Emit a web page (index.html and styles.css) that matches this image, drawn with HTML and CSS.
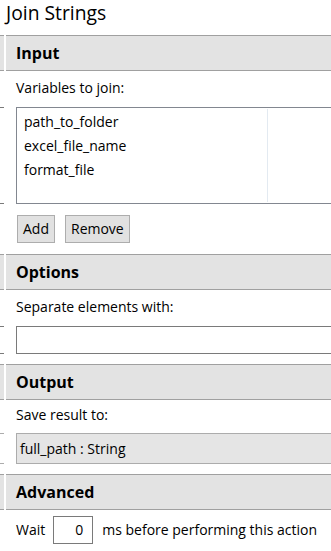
FILE: index.html
```html
<!DOCTYPE html>
<html lang="en">
<head>
<meta charset="utf-8">
<title>Join Strings</title>
<link rel="stylesheet" href="styles.css">
</head>
<body>
<div class="panel">
  <div class="title">Join Strings</div>

  <div class="row hdr"><div class="gut"></div><h2 class="hdr-bar">Input</h2></div>
  <div class="label">Variables to join:</div>
  <div class="row ctl ctl-list">
    <div class="gut"></div>
    <div class="main">
      <div class="listbox">
        <div class="list-col">
          <div class="item">path_to_folder</div>
          <div class="item">excel_file_name</div>
          <div class="item">format_file</div>
        </div>
      </div>
    </div>
  </div>
  <div class="buttons">
    <button class="btn">Add</button>
    <button class="btn">Remove</button>
  </div>

  <div class="row hdr"><div class="gut"></div><h2 class="hdr-bar">Options</h2></div>
  <div class="label">Separate elements with:</div>
  <div class="row ctl">
    <div class="gut"></div>
    <div class="main"><div class="textbox"></div></div>
  </div>

  <div class="row hdr"><div class="gut"></div><h2 class="hdr-bar">Output</h2></div>
  <div class="label label-tight">Save result to:</div>
  <div class="row ctl ctl-light">
    <div class="gut"></div>
    <div class="main"><div class="combo">full_path : String</div></div>
  </div>

  <div class="row hdr"><div class="gut"></div><h2 class="hdr-bar">Advanced</h2></div>
  <div class="wait">
    <span class="wait-text">Wait</span>
    <span class="num">0</span>
    <span class="wait-text">ms before performing this action</span>
  </div>
</div>
</body>
</html>
```
FILE: styles.css
```css
html, body {
  margin: 0;
  padding: 0;
  background: #ffffff;
  overflow: hidden;
}

body {
  font-family: "Open Sans", "Noto Sans", sans-serif;
  font-size: 14px;
  color: #000000;
}

.panel {
  width: 331px;
}

.title {
  font-size: 19.3px;
  line-height: 26px;
  height: 35px;
  padding-left: 6px;
  box-sizing: border-box;
}

.row {
  display: flex;
  column-gap: 2px;
}

.gut {
  flex: none;
  width: 4px;
  box-sizing: border-box;
}

.hdr .gut,
.hdr-bar {
  background: #e3e3e3;
  border-top: 1px solid #a0a0a0;
  border-bottom: 1px solid #a0a0a0;
}

.hdr-bar {
  flex: 1;
  margin: 0;
  height: 36px;
  box-sizing: border-box;
  padding-left: 10px;
  font-size: 16px;
  font-weight: 700;
  line-height: 34px;
}

.label {
  padding: 7px 0 9px 16px;
  line-height: 20px;
}

.label-tight {
  padding: 5px 0 8px 16px;
}

.ctl {
  margin-bottom: 10px;
}

.ctl-list {
  margin-bottom: 0;
}

.ctl .gut {
  border-top: 1px solid #7a7a7a;
  border-bottom: 1px solid #7a7a7a;
}

.ctl-light .gut {
  border-color: #acacac;
}

.main {
  flex: 1;
  min-width: 0;
  padding-left: 10px;
}

.listbox {
  height: 97px;
  box-sizing: border-box;
  border: 1px solid #828790;
  border-right: none;
  display: flex;
}

.list-col {
  width: 251px;
  margin: 1px 0;
  padding: 1px 0 0 7px;
  box-sizing: border-box;
  border-right: 1px solid #e3eaf1;
}

.item {
  line-height: 24px;
  white-space: nowrap;
}

.buttons {
  display: flex;
  column-gap: 10px;
  padding: 11px 0 11px 17px;
}

.btn {
  height: 28px;
  box-sizing: border-box;
  border: 1px solid #adadad;
  background: #e1e1e1;
  padding: 0 5px;
  margin: 0;
  font: inherit;
  line-height: 26px;
  color: #000000;
  border-radius: 0;
}

.textbox {
  height: 28px;
  box-sizing: border-box;
  border: 1px solid #7a7a7a;
  border-right: none;
  background: #ffffff;
}

.combo {
  height: 31px;
  box-sizing: border-box;
  border: 1px solid #acacac;
  border-right: none;
  background: #e5e5e5;
  padding: 1px 0 0 3px;
  line-height: 28px;
  white-space: nowrap;
}

.wait {
  display: flex;
  align-items: center;
  padding: 6px 0 0 16px;
  line-height: 20px;
  white-space: nowrap;
}

.num {
  width: 40px;
  height: 28px;
  box-sizing: border-box;
  border: 1px solid #7a7a7a;
  text-align: right;
  padding-right: 9px;
  line-height: 26px;
  margin: 0 9px 0 8px;
}
```
